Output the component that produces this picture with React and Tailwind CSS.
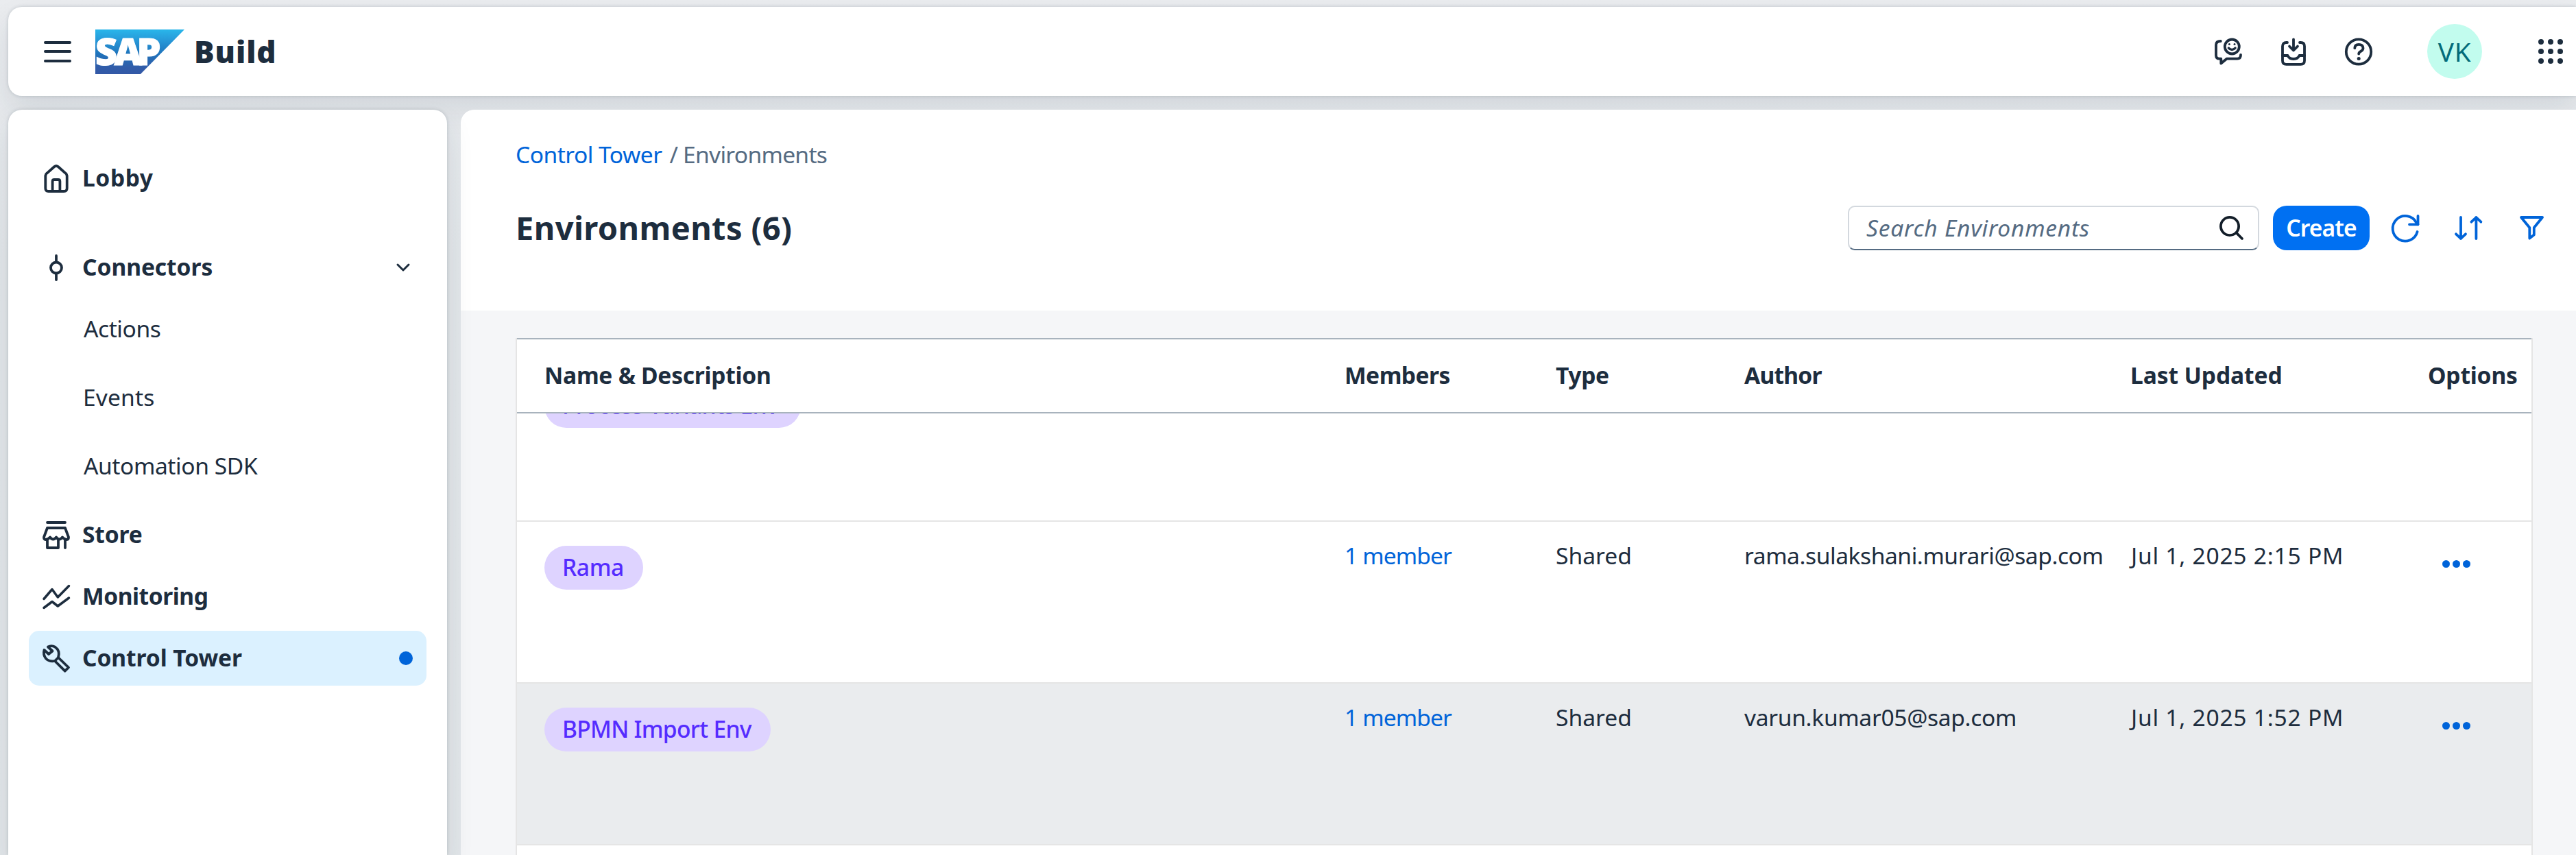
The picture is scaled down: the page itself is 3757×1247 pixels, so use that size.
import React from "react";

const stroke = {
  fill: "none",
  stroke: "currentColor",
  strokeWidth: 3.8,
  strokeLinecap: "round",
  strokeLinejoin: "round",
};

function Icon({ w = 40, h = 40, className = "", children, ...rest }) {
  return (
    <svg
      width={w}
      height={h}
      viewBox={`0 0 ${w} ${h}`}
      className={`shrink-0 overflow-visible ${className}`}
      {...stroke}
      {...rest}
    >
      {children}
    </svg>
  );
}

const HomeIcon = () => (
  <Icon>
    <path d="M4.3 17 Q4.3 14.3 6.5 12.6 L17.3 3 Q20 .9 22.7 3 L33.5 12.6 Q35.7 14.3 35.7 17 V34.5 Q35.7 39 31.2 39 H8.8 Q4.3 39 4.3 34.5 Z" />
    <path d="M14.6 38.5 V24.5 Q14.6 22 17.1 22 H22.9 Q25.4 22 25.4 24.5 V38.5" />
  </Icon>
);

const ConnectorIcon = () => (
  <Icon>
    <circle cx="20" cy="20.5" r="8" />
    <path d="M20 3 V12 M20 29 V38" />
  </Icon>
);

const StoreIcon = () => (
  <Icon>
    <path d="M7 2 H33" />
    <path d="M7 10 H33 L38 23.5 Q38 27 35.5 27 Q32 27 29 23.5 Q24.5 29.5 20 23.5 Q15.5 29.5 11 23.5 Q8 27 4.5 27 Q2 27 2 23.5 Z" />
    <path d="M7 27 V39 H23 V27 M33 27 V39" />
  </Icon>
);

const MonitoringIcon = () => (
  <Icon strokeWidth="3.5">
    <path d="M2 23.5 L14 9.5 L22.3 21 L38.5 4.5" />
    <path d="M2 36.5 L14 27.5 L22.3 34 L38.5 22" />
  </Icon>
);

const WrenchIcon = () => (
  <Icon strokeWidth="3.8">
    <path d="M8 3.5 Q13 .8 18.5 3.7 Q26 9 23 19 L38 33.5 L32.7 38.7 L18 24 Q10 25.5 5 20.5 Q.5 15 2.5 8 L9 14 L14.5 9.5 Z" />
    <path d="M18 24 L23 19" />
  </Icon>
);

const FeedbackIcon = () => (
  <Icon>
    <path d="M8.8 5 Q2 5 2 10.5 V25.5 Q2 30.7 7 30.7 H9.3 V37.5 L17.5 30.7 H33 Q38 30.7 38 25" />
    <circle cx="25.3" cy="13" r="10.5" />
    <circle cx="21.4" cy="9.5" r="1.5" fill="currentColor" stroke="none" />
    <circle cx="29" cy="9.5" r="1.5" fill="currentColor" stroke="none" />
    <path d="M20.3 15 Q25.2 20 30.1 15" strokeWidth="3.3" />
  </Icon>
);

const InboxIcon = () => (
  <Icon w={36}>
    <path d="M9 7 H7.5 Q2 7 2 12.5 V33.5 Q2 38.8 7.5 38.8 H28.5 Q34 38.8 34 33.5 V12.5 Q34 7 28.5 7 H27" />
    <path d="M18 2.5 V17 M12 12.5 L18 18.5 L24 12.5" />
    <path d="M2 26 H9.5 Q11.5 31 18 31 Q24.5 31 26.5 26 H34" />
  </Icon>
);

const HelpIcon = () => (
  <Icon>
    <circle cx="20" cy="20.5" r="18.2" />
    <path d="M14.3 15.2 Q14.3 9.8 20.2 9.8 Q26.5 9.8 26.5 15.2 Q26.5 18 23.3 19.7 Q20.2 21.3 20.2 23.6" />
    <circle cx="20.2" cy="30.5" r="2.5" fill="currentColor" stroke="none" />
  </Icon>
);

const SearchIcon = () => (
  <Icon w={35} h={35}>
    <circle cx="15" cy="15" r="13.1" />
    <path d="M24.7 24.7 L33 33" />
  </Icon>
);

const RefreshIcon = () => (
  <Icon strokeWidth="3.8">
    <path d="M37.6 25 A18.3 18.3 0 1 1 36 11.5 L38.5 14.3" />
    <path d="M38.5 2 V14.3 H26" />
  </Icon>
);

const SortIcon = () => (
  <Icon w={41} h={35} strokeWidth="3.8">
    <path d="M9 2 V33 M2 26.3 L9 33 L16 26.3" />
    <path d="M31.4 33 V2 M24.4 8.7 L31.4 2 L38.4 8.7" />
  </Icon>
);

const FilterIcon = () => (
  <Icon w={35} h={35} strokeWidth="3.8">
    <path d="M2 2 H33 L20.8 17 V27.5 L14.3 32.5 V17 Z" />
  </Icon>
);

function SapLogo() {
  return (
    <svg width="130" height="65" viewBox="0 0 130 65" className="shrink-0 overflow-visible">
      <defs>
        <linearGradient id="sapBlue" x1="0" y1="0" x2="0" y2="1">
          <stop offset="0" stopColor="#29b6ea" />
          <stop offset=".25" stopColor="#2798d8" />
          <stop offset=".55" stopColor="#1f73bb" />
          <stop offset=".85" stopColor="#315ca9" />
          <stop offset="1" stopColor="#3358a6" />
        </linearGradient>
      </defs>
      <polygon points="0,0 130,0 66,65 0,65" fill="url(#sapBlue)" />
      <text
        x="0 27.5 60.5"
        y="52"
        fill="#fff"
        stroke="#fff"
        strokeWidth="1.2"
        className="font-['Open_Sans',sans-serif] text-[55.5px] font-extrabold"
      >
        SAP
      </text>
    </svg>
  );
}

function NavItem({ icon, label, tracking, className = "", children }) {
  return (
    <div className={`flex h-[80px] items-center rounded-[15px] px-[20px] ${className}`}>
      {icon}
      <span className={`ml-[18px] pb-[2px] font-bold ${tracking}`}>{label}</span>
      {children}
    </div>
  );
}

function SubItem({ label, tracking, className = "" }) {
  return (
    <div className={`flex h-[80px] items-center pl-[80px] pb-[2px] ${tracking} ${className}`}>{label}</div>
  );
}

function Chip({ name, className }) {
  return (
    <span
      className={`mt-[35px] flex h-[64px] items-center rounded-[32px] bg-[#ded3ff] pb-[2px] pl-[26px] font-medium text-[#552cff] ${className}`}
    >
      {name}
    </span>
  );
}

const columns = "grid grid-cols-[1167px_308px_275px_562px_435px_1fr] pl-[40px]";

function Row({ name, chip, author, authorTracking, updated, className = "" }) {
  return (
    <div className={`${columns} h-[236px] shrink-0 items-start border-b-2 border-[#e5e5e5] ${className}`}>
      <Chip name={name} className={chip} />
      <span className="pt-[25px] tracking-[-0.89px] text-[#0064d9]">1 member</span>
      <span className="pt-[25px]">Shared</span>
      <span className={`pt-[25px] ${authorTracking}`}>{author}</span>
      <span className="pt-[25px] pl-[2px] tracking-[0.75px]">{updated}</span>
      <span className="mt-[56px] ml-[21px] flex gap-[4px]">
        <i className="size-[11px] rounded-full bg-[#0064d9]" />
        <i className="size-[11px] rounded-full bg-[#0064d9]" />
        <i className="size-[11px] rounded-full bg-[#0064d9]" />
      </span>
    </div>
  );
}

function AppGrid() {
  return (
    <div className="grid grid-cols-3 gap-x-[6px] gap-y-[6px]">
      {Array.from({ length: 9 }, (_, i) => (
        <i key={i} className="size-[8px] rounded-full bg-[#1d2d3e]" />
      ))}
    </div>
  );
}

export default function App() {
  return (
    <div className="flex h-[1247px] w-[3757px] flex-col overflow-hidden bg-linear-to-b from-[#eaecef] from-0% to-[#e2e6e9] to-30% pt-[10px] pl-[12px] font-['Noto_Sans',sans-serif] text-[33.6px] leading-[48px] text-[#1d2d3e]">
      <header className="flex h-[130px] shrink-0 items-center rounded-l-[20px] bg-white pr-[19px] pl-[52px] shadow-[0_0_5px_rgba(34,53,72,0.2),0_20px_40px_rgba(34,53,72,0.1)]">
        <div className="flex w-[40px] flex-col gap-[9.5px]">
          <i className="h-[4px] rounded-full bg-[#1d2d3e]" />
          <i className="h-[4px] rounded-full bg-[#1d2d3e]" />
          <i className="h-[4px] rounded-full bg-[#1d2d3e]" />
        </div>
        <div className="ml-[35px]">
          <SapLogo />
        </div>
        <span className="ml-[14px] text-[44px] font-black tracking-[0.9px]">Build</span>
        <div className="ml-auto flex items-center">
          <FeedbackIcon />
          <div className="ml-[57px]">
            <InboxIcon />
          </div>
          <div className="ml-[57px]">
            <HelpIcon />
          </div>
          <div className="ml-[80px] flex size-[80px] items-center justify-center rounded-full bg-[#c2fcee] text-[38.5px] tracking-[0.9px] text-[#046c7a]">
            VK
          </div>
          <div className="ml-[82px]">
            <AppGrid />
          </div>
        </div>
      </header>

      <div className="flex min-h-0 flex-1 gap-[20px] pt-[20px]">
        <nav className="relative z-10 flex w-[640px] shrink-0 flex-col rounded-t-[20px] bg-white px-[30px] pt-[60px] shadow-[0_0_5px_rgba(34,53,72,0.2),0_20px_40px_rgba(34,53,72,0.1)]">
          <NavItem icon={<HomeIcon />} label="Lobby" tracking="tracking-[0.57px]" />
          <NavItem icon={<ConnectorIcon />} label="Connectors" tracking="tracking-[-0.08px]" className="mt-[50px]">
            <Icon w={20} h={12} strokeWidth="3" className="mr-[4px] ml-auto">
              <path d="M2 2 L10 10 L18 2" />
            </Icon>
          </NavItem>
          <div className="my-[10px] flex flex-col gap-[20px]">
            <SubItem label="Actions" tracking="tracking-[-0.45px]" />
            <SubItem label="Events" tracking="tracking-[0.15px]" className="-ml-px" />
            <SubItem label="Automation SDK" tracking="tracking-[-0.42px]" />
          </div>
          <NavItem icon={<StoreIcon />} label="Store" tracking="tracking-[-0.17px]" className="mt-[10px]" />
          <NavItem icon={<MonitoringIcon />} label="Monitoring" tracking="tracking-[-0.48px]" className="mt-[10px]" />
          <NavItem
            icon={<WrenchIcon />}
            label="Control Tower"
            tracking="tracking-[-0.09px]"
            className="mt-[10px] bg-[#dbf1ff]"
          >
            <i className="ml-auto size-[20px] rounded-full bg-[#0064d9]" />
          </NavItem>
        </nav>

        <main className="flex min-w-0 flex-1 flex-col overflow-hidden rounded-tl-[20px] bg-[#f5f6f8]">
          <div className="h-[293px] shrink-0 bg-white pt-[41px] pr-[47px] pl-[80px]">
            <div className="text-[#556b82]">
              <span className="tracking-[-0.53px] text-[#0064d9]">Control Tower</span>
              <span className="mr-[7px] ml-[11px]">/</span>
              <span className="tracking-[-0.72px]">Environments</span>
            </div>
            <div className="mt-[51px] flex h-[65px] items-center">
              <h1 className="pb-[2px] text-[47px] font-bold tracking-[0.39px]">Environments (6)</h1>
              <div className="ml-auto flex h-[65px] w-[600px] items-center justify-between rounded-[10px] border-2 border-[#d3d8de] border-b-[#556b82] pr-[21px] pl-[25px]">
                <span className="pb-[2px] tracking-[0.73px] text-[#556b82] italic">Search Environments</span>
                <span className="text-[#131e29]">
                  <SearchIcon />
                </span>
              </div>
              <div className="ml-[20px] flex h-[65px] w-[141px] items-center justify-center rounded-[20px] bg-[#0070f2] pb-[2px] font-semibold tracking-[-0.91px] text-white">
                Create
              </div>
              <div className="ml-[32px] flex items-center text-[#0064d9]">
                <RefreshIcon />
                <div className="ml-[52px]">
                  <SortIcon />
                </div>
                <div className="ml-[54px]">
                  <FilterIcon />
                </div>
              </div>
            </div>
          </div>

          <section className="mt-[40px] mr-[63px] ml-[80px] flex min-h-0 flex-1 flex-col border-x-2 border-x-[#e5e5e5] bg-white">
            <div
              className={`${columns} h-[110px] shrink-0 items-center border-y-2 border-[#a8b3bd] pb-[2px] font-bold`}
            >
              <span className="tracking-[-0.26px]">Name &amp; Description</span>
              <span className="tracking-[-0.54px]">Members</span>
              <span className="tracking-[-0.37px]">Type</span>
              <span className="tracking-[-0.8px]">Author</span>
              <span className="pl-px tracking-[-0.1px]">Last Updated</span>
              <span className="tracking-[-0.2px]">Options</span>
            </div>
            <div className="flex min-h-0 flex-1 flex-col overflow-hidden">
              <div className={`${columns} -mt-[78px] h-[236px] shrink-0 items-start border-b-2 border-[#e5e5e5]`}>
                <Chip name="Process Variants Env" className="w-[374px] tracking-[-0.75px]" />
              </div>
              <Row
                name="Rama"
                chip="w-[144px] tracking-[-0.4px]"
                author="rama.sulakshani.murari@sap.com"
                authorTracking="tracking-[-0.45px]"
                updated="Jul 1, 2025 2:15 PM"
              />
              <Row
                name="BPMN Import Env"
                chip="w-[330px] tracking-[-0.7px]"
                author="varun.kumar05@sap.com"
                authorTracking="tracking-[-0.33px]"
                updated="Jul 1, 2025 1:52 PM"
                className="bg-[#eaecee]"
              />
            </div>
          </section>
        </main>
      </div>
    </div>
  );
}
